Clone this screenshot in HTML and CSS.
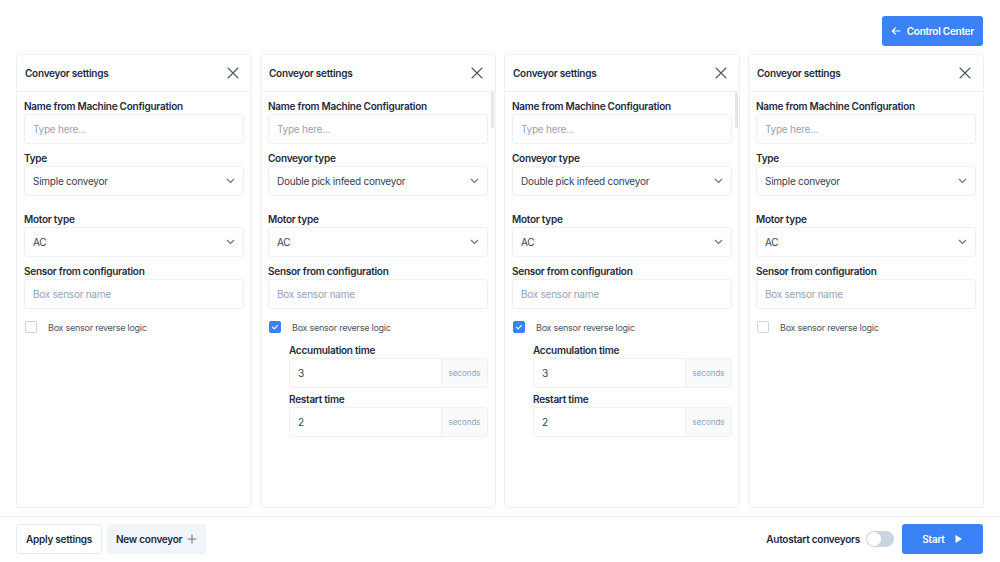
FILE: index.html
```html
<!DOCTYPE html>
<html>
<head>
    <title>Conveyor settings</title>
    <link rel="stylesheet" href="styles.css">
</head>
<body>
    <div class="page">
        <div class="topbar">
            <button class="btn btn-primary btn-back">
                <svg width="10" height="10" viewBox="0 0 10 10"><path d="M9 5H1.5M4.5 1.8L1.3 5l3.2 3.2" fill="none" stroke="#fff" stroke-width="1.2" stroke-linecap="round" stroke-linejoin="round"/></svg>
                Control Center
            </button>
        </div>

        <div class="panels">
            <!-- panel 1 -->
            <div class="panel">
                <div class="panel-head">
                    <span>Conveyor settings</span>
                    <svg class="close" width="12" height="12" viewBox="0 0 12 12"><path d="M1 1l10 10M11 1L1 11" stroke="#475569" stroke-width="1.1" stroke-linecap="round"/></svg>
                </div>
                <div class="panel-body">
                    <div class="field">
                        <label>Name from Machine Configuration</label>
                        <div class="input placeholder">Type here...</div>
                    </div>
                    <div class="field group">
                        <label>Type</label>
                        <div class="input select">Simple conveyor <svg class="chev" width="9" height="6" viewBox="0 0 9 6"><path d="M1 1l3.5 3.5L8 1" fill="none" stroke="#64748b" stroke-width="1.1"/></svg></div>
                    </div>
                    <div class="field">
                        <label>Motor type</label>
                        <div class="input select">AC <svg class="chev" width="9" height="6" viewBox="0 0 9 6"><path d="M1 1l3.5 3.5L8 1" fill="none" stroke="#64748b" stroke-width="1.1"/></svg></div>
                    </div>
                    <div class="field">
                        <label>Sensor from configuration</label>
                        <div class="input placeholder">Box sensor name</div>
                    </div>
                    <div class="check">
                        <span class="box"></span>
                        Box sensor reverse logic
                    </div>
                </div>
            </div>

            <!-- panel 2 -->
            <div class="panel has-scroll">
                <div class="panel-head">
                    <span>Conveyor settings</span>
                    <svg class="close" width="12" height="12" viewBox="0 0 12 12"><path d="M1 1l10 10M11 1L1 11" stroke="#475569" stroke-width="1.1" stroke-linecap="round"/></svg>
                </div>
                <div class="panel-body">
                    <div class="field">
                        <label>Name from Machine Configuration</label>
                        <div class="input placeholder">Type here...</div>
                    </div>
                    <div class="field group">
                        <label>Conveyor type</label>
                        <div class="input select">Double pick infeed conveyor <svg class="chev" width="9" height="6" viewBox="0 0 9 6"><path d="M1 1l3.5 3.5L8 1" fill="none" stroke="#64748b" stroke-width="1.1"/></svg></div>
                    </div>
                    <div class="field">
                        <label>Motor type</label>
                        <div class="input select">AC <svg class="chev" width="9" height="6" viewBox="0 0 9 6"><path d="M1 1l3.5 3.5L8 1" fill="none" stroke="#64748b" stroke-width="1.1"/></svg></div>
                    </div>
                    <div class="field">
                        <label>Sensor from configuration</label>
                        <div class="input placeholder">Box sensor name</div>
                    </div>
                    <div class="check">
                        <span class="box checked"><svg width="8" height="8" viewBox="0 0 8 8"><path d="M1.5 4.2l1.7 1.6L6.5 2.3" fill="none" stroke="#fff" stroke-width="1.1" stroke-linecap="round" stroke-linejoin="round"/></svg></span>
                        Box sensor reverse logic
                    </div>
                    <div class="sub">
                        <div class="field">
                            <label>Accumulation time</label>
                            <div class="input addon"><span class="val">3</span><span class="unit">seconds</span></div>
                        </div>
                        <div class="field">
                            <label>Restart time</label>
                            <div class="input addon"><span class="val">2</span><span class="unit">seconds</span></div>
                        </div>
                    </div>
                </div>
            </div>

            <!-- panel 3 -->
            <div class="panel has-scroll">
                <div class="panel-head">
                    <span>Conveyor settings</span>
                    <svg class="close" width="12" height="12" viewBox="0 0 12 12"><path d="M1 1l10 10M11 1L1 11" stroke="#475569" stroke-width="1.1" stroke-linecap="round"/></svg>
                </div>
                <div class="panel-body">
                    <div class="field">
                        <label>Name from Machine Configuration</label>
                        <div class="input placeholder">Type here...</div>
                    </div>
                    <div class="field group">
                        <label>Conveyor type</label>
                        <div class="input select">Double pick infeed conveyor <svg class="chev" width="9" height="6" viewBox="0 0 9 6"><path d="M1 1l3.5 3.5L8 1" fill="none" stroke="#64748b" stroke-width="1.1"/></svg></div>
                    </div>
                    <div class="field">
                        <label>Motor type</label>
                        <div class="input select">AC <svg class="chev" width="9" height="6" viewBox="0 0 9 6"><path d="M1 1l3.5 3.5L8 1" fill="none" stroke="#64748b" stroke-width="1.1"/></svg></div>
                    </div>
                    <div class="field">
                        <label>Sensor from configuration</label>
                        <div class="input placeholder">Box sensor name</div>
                    </div>
                    <div class="check">
                        <span class="box checked"><svg width="8" height="8" viewBox="0 0 8 8"><path d="M1.5 4.2l1.7 1.6L6.5 2.3" fill="none" stroke="#fff" stroke-width="1.1" stroke-linecap="round" stroke-linejoin="round"/></svg></span>
                        Box sensor reverse logic
                    </div>
                    <div class="sub">
                        <div class="field">
                            <label>Accumulation time</label>
                            <div class="input addon"><span class="val">3</span><span class="unit">seconds</span></div>
                        </div>
                        <div class="field">
                            <label>Restart time</label>
                            <div class="input addon"><span class="val">2</span><span class="unit">seconds</span></div>
                        </div>
                    </div>
                </div>
            </div>

            <!-- panel 4 -->
            <div class="panel">
                <div class="panel-head">
                    <span>Conveyor settings</span>
                    <svg class="close" width="12" height="12" viewBox="0 0 12 12"><path d="M1 1l10 10M11 1L1 11" stroke="#475569" stroke-width="1.1" stroke-linecap="round"/></svg>
                </div>
                <div class="panel-body">
                    <div class="field">
                        <label>Name from Machine Configuration</label>
                        <div class="input placeholder">Type here...</div>
                    </div>
                    <div class="field group">
                        <label>Type</label>
                        <div class="input select">Simple conveyor <svg class="chev" width="9" height="6" viewBox="0 0 9 6"><path d="M1 1l3.5 3.5L8 1" fill="none" stroke="#64748b" stroke-width="1.1"/></svg></div>
                    </div>
                    <div class="field">
                        <label>Motor type</label>
                        <div class="input select">AC <svg class="chev" width="9" height="6" viewBox="0 0 9 6"><path d="M1 1l3.5 3.5L8 1" fill="none" stroke="#64748b" stroke-width="1.1"/></svg></div>
                    </div>
                    <div class="field">
                        <label>Sensor from configuration</label>
                        <div class="input placeholder">Box sensor name</div>
                    </div>
                    <div class="check">
                        <span class="box"></span>
                        Box sensor reverse logic
                    </div>
                </div>
            </div>
        </div>

        <div class="footer">
            <div class="footer-left">
                <button class="btn btn-outline">Apply settings</button>
                <button class="btn btn-light">New conveyor
                    <svg width="10" height="10" viewBox="0 0 10 10"><path d="M5 1v8M1 5h8" stroke="#64748b" stroke-width="1.1" stroke-linecap="round"/></svg>
                </button>
            </div>
            <div class="footer-right">
                <span class="toggle-label">Autostart conveyors</span>
                <span class="toggle"><span class="knob"></span></span>
                <button class="btn btn-primary btn-start">Start
                    <svg width="9" height="10" viewBox="0 0 9 10"><path d="M1.5 1v8l6.5-4z" fill="#fff"/></svg>
                </button>
            </div>
        </div>
    </div>
</body>
</html>
```

FILE: styles.css
```css
* {
    box-sizing: border-box;
}
body {
    margin: 0;
    font-family: Inter, "Noto Sans", sans-serif;
    letter-spacing: -0.25px;
    background-color: #ffffff;
    color: #1e293b;
}
.page {
    height: 562px;
    display: flex;
    flex-direction: column;
}
.topbar {
    display: flex;
    justify-content: flex-end;
    padding: 16px 17px 8px 16px;
}
.btn {
    height: 30px;
    border: none;
    border-radius: 3px;
    font-family: inherit;
    font-size: 10px;
    font-weight: 600;
    letter-spacing: -0.25px;
    display: inline-flex;
    align-items: center;
    gap: 5px;
    padding: 0 9px;
    cursor: pointer;
}
.btn-primary {
    background-color: #3b82f6;
    color: #fff;
}
.btn-back {
    gap: 6px;
}
.btn-outline {
    background: #fff;
    border: 1px solid #e5e9f0;
    color: #1e293b;
}
.btn-light {
    background: #f1f5f9;
    color: #1e293b;
}
.btn-start {
    width: 81px;
    justify-content: center;
    gap: 9px;
}

.panels {
    flex: 1;
    display: flex;
    gap: 8px;
    padding: 0 16px;
    min-height: 0;
}
.panel {
    position: relative;
    width: 236px;
    border: 1px solid #edf0f4;
    border-radius: 3px;
    display: flex;
    flex-direction: column;
}
.has-scroll::after {
    content: "";
    position: absolute;
    right: 1px;
    top: 37px;
    width: 3px;
    height: 36px;
    border-radius: 2px;
    background: #e2e6ec;
}
.panel-head {
    height: 37px;
    display: flex;
    align-items: center;
    justify-content: space-between;
    padding: 0 12px 0 8px;
    border-bottom: 1px solid #edf0f4;
    font-size: 10px;
    font-weight: 600;
}
.panel-body {
    padding: 8px 7px 0 7px;
}
.field {
    margin-bottom: 8px;
}
.field.group {
    margin-bottom: 17px;
}
.field label {
    display: block;
    font-size: 10px;
    font-weight: 600;
    line-height: 13px;
    margin-bottom: 1px;
}
.input {
    height: 30px;
    border: 1px solid #edf0f4;
    border-radius: 3px;
    display: flex;
    align-items: center;
    padding: 0 8px;
    font-size: 10px;
    color: #334155;
}
.placeholder {
    color: #94a3b8;
}
.select {
    justify-content: space-between;
    padding-right: 8px;
}
.check {
    display: flex;
    align-items: center;
    gap: 11px;
    font-size: 9px;
    color: #475569;
    margin: 12px 0 11px 1px;
}
.box {
    width: 12px;
    height: 12px;
    border: 1px solid #cbd5e1;
    border-radius: 2px;
    display: inline-flex;
    align-items: center;
    justify-content: center;
}
.box.checked {
    background: #3b82f6;
    border-color: #3b82f6;
}
.sub {
    padding-left: 21px;
}
.sub .field {
    margin-bottom: 5px;
}
.addon {
    padding: 0;
    overflow: hidden;
}
.addon .val {
    flex: 1;
    padding-left: 8px;
}
.addon .unit {
    width: 46px;
    height: 100%;
    border-left: 1px solid #edf0f4;
    background: #f8fafc;
    color: #94a3b8;
    font-size: 8px;
    letter-spacing: 0;
    display: flex;
    align-items: center;
    justify-content: center;
}

.footer {
    margin-top: 8px;
    border-top: 1px solid #edf0f4;
    padding: 7px 17px 8px 16px;
    display: flex;
    justify-content: space-between;
    align-items: center;
}
.footer-left {
    display: flex;
    gap: 5px;
}
.footer-right {
    display: flex;
    align-items: center;
}
.toggle-label {
    font-size: 10px;
    font-weight: 600;
    color: #1e293b;
    margin-right: 6px;
}
.toggle {
    width: 28px;
    height: 16px;
    border-radius: 8px;
    background: #cbd5e1;
    position: relative;
    margin-right: 8px;
}
.knob {
    position: absolute;
    left: 1px;
    top: 1px;
    width: 14px;
    height: 14px;
    border-radius: 50%;
    background: #fff;
}
```
